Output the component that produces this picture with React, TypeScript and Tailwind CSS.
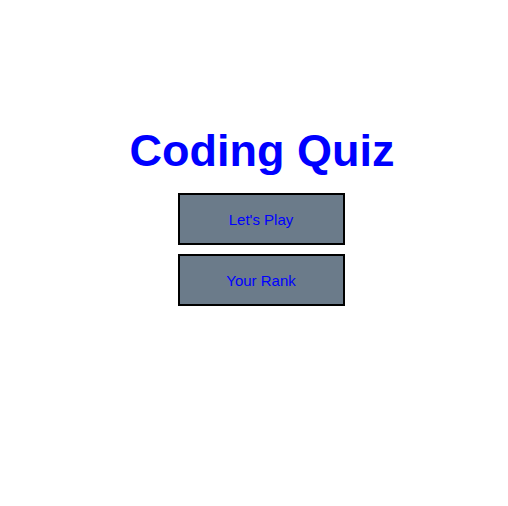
import React from 'react';

const App = () => {
    return (
        <div className="w-[508px] h-[506px] bg-white font-['Liberation_Sans',Arial,sans-serif]">
            <div className="flex flex-col items-center pt-[125px] pl-[16px]">
                <h1 className="text-[45px] leading-[52px] font-bold text-[#0000ff]">Coding Quiz</h1>
                <div className="flex flex-col gap-[9px] mt-[16px] mr-[2px]">
                    <button className="w-[167px] h-[52px] pt-[2px] bg-[#6b7b8a] border-2 border-black text-[15px] text-[#0000ff]">
                        Let's Play
                    </button>
                    <button className="w-[167px] h-[52px] pt-[2px] bg-[#6b7b8a] border-2 border-black text-[15px] text-[#0000ff]">
                        Your Rank
                    </button>
                </div>
            </div>
        </div>
    );
};

export default App;
